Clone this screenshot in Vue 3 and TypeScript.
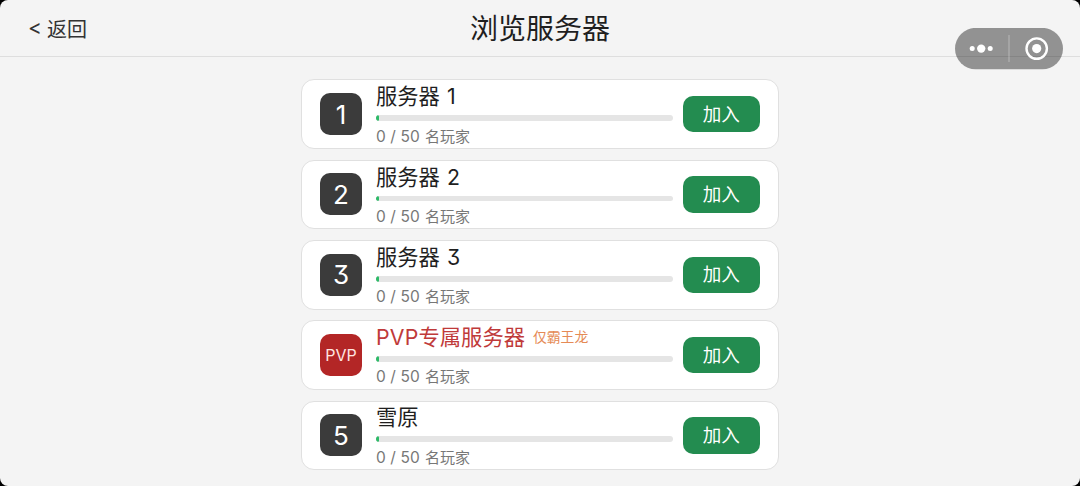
<script setup lang="ts">
interface Server {
  badge: string
  prefix?: string
  name: string
  suffix?: string
  pvp?: boolean
  note?: string
  players: number
  capacity: number
}

const servers: Server[] = [
  { badge: '1', name: '服务器', suffix: '1', players: 0, capacity: 50 },
  { badge: '2', name: '服务器', suffix: '2', players: 0, capacity: 50 },
  { badge: '3', name: '服务器', suffix: '3', players: 0, capacity: 50 },
  { badge: 'PVP', prefix: 'PVP', name: '专属服务器', pvp: true, note: '仅霸王龙', players: 0, capacity: 50 },
  { badge: '5', name: '雪原', players: 0, capacity: 50 },
]

// A sliver stays visible even when a server is empty
const fill = (s: Server): string => `${Math.max(1, (s.players / s.capacity) * 100)}%`
</script>

<template>
  <div class="screen">
    <header class="bar">
      <button class="back"><span class="chevron">&lt;</span>返回</button>
      <h1 class="title">浏览服务器</h1>
    </header>
    <main class="list">
      <section v-for="s in servers" :key="s.badge" class="card">
        <div class="badge" :class="{ pvp: s.pvp }">{{ s.badge }}</div>
        <div class="info">
          <div class="name" :class="{ pvp: s.pvp }">
            <span v-if="s.prefix" class="prefix">{{ s.prefix }}</span>
            <span>{{ s.name }}</span>
            <span v-if="s.suffix" class="suffix">{{ s.suffix }}</span>
            <span v-if="s.note" class="note">{{ s.note }}</span>
          </div>
          <div class="track"><div class="fill" :style="{ width: fill(s) }"></div></div>
          <div class="players"><span class="count">{{ s.players }} / {{ s.capacity }}</span>名玩家</div>
        </div>
        <button class="join">加入</button>
      </section>
    </main>
    <svg class="capsule" width="108" height="42" viewBox="0 0 108 42">
      <rect y="-0.1" width="108" height="41.4" rx="20.7" fill="#000" fill-opacity=".4" />
      <circle cx="17.2" cy="20.6" r="2.5" fill="#fff" />
      <circle cx="26.2" cy="20.6" r="4.2" fill="#fff" />
      <circle cx="35.2" cy="20.6" r="2.5" fill="#fff" />
      <path d="M54 7v27" stroke="#fff" stroke-opacity=".28" stroke-width="1.3" />
      <circle cx="81.7" cy="20.6" r="10.2" fill="none" stroke="#fff" stroke-width="2.4" />
      <circle cx="81.7" cy="20.6" r="4.6" fill="#fff" />
    </svg>
  </div>
</template>

<style>
body {
  margin: 0;
  background: #000;
}
</style>

<style scoped>
.screen {
  position: relative;
  box-sizing: border-box;
  width: 1080px;
  height: 486px;
  overflow: hidden;
  border-radius: 8px;
  background: #f4f4f4;
  color: #1f1f1f;
  font-family: Inter, "Noto Sans CJK SC", sans-serif;
  font-feature-settings: "cv09";
}
button {
  padding: 0;
  border: 0;
  font-family: inherit;
}
.bar {
  display: grid;
  grid-template-columns: 1fr auto 1fr;
  align-items: center;
  box-sizing: border-box;
  height: 57px;
  padding-top: 3px;
  border-bottom: 1px solid #dedede;
}
.back {
  display: flex;
  align-items: center;
  justify-self: start;
  margin-left: 28px;
  background: none;
  color: #333;
  font-size: 20px;
  line-height: 28px;
}
.chevron {
  width: 19px;
  margin-top: -3px;
  text-align: left;
  font-size: 21px;
}
.title {
  margin: 0 0 2px;
  font-size: 28px;
  font-weight: 400;
  line-height: 40px;
}
.list {
  display: flex;
  flex-direction: column;
  gap: 10.7px;
  width: 478px;
  margin: 22.4px auto 0;
}
.card {
  display: flex;
  align-items: center;
  box-sizing: border-box;
  height: 69.6px;
  padding: 0 18.5px 0 18px;
  border: 1px solid #e0e0e0;
  border-radius: 13px;
  background: #fff;
}
.badge {
  display: flex;
  align-items: center;
  justify-content: center;
  flex: none;
  width: 42px;
  height: 42px;
  border-radius: 10px;
  background: #3b3b3b;
  color: #fff;
  font-size: 26px;
}
.badge.pvp {
  background: #b32626;
  color: #ffe5e0;
  font-size: 16px;
}
.info {
  flex: 1;
  margin: 0 10.5px 0 14px;
  padding-top: 1.5px;
}
.name {
  display: flex;
  align-items: center;
  height: 27px;
  font-size: 21.3px;
  line-height: 27px;
  white-space: nowrap;
}
.name.pvp {
  color: #bf3a3a;
}
.prefix {
  letter-spacing: 0.2px;
}
.suffix {
  margin-left: 7px;
}
.note {
  margin-left: 8px;
  color: #e58a55;
  font-size: 13.8px;
}
.track {
  height: 5.8px;
  margin-top: 5px;
  overflow: hidden;
  border-radius: 3px;
  background: #e5e5e5;
}
.fill {
  height: 100%;
  border-radius: 3px;
  background: #2dba68;
}
.players {
  display: flex;
  margin-top: 5.5px;
  color: #777;
  font-size: 15px;
  line-height: 20px;
}
.count {
  width: 49px;
  font-size: 15.5px;
  letter-spacing: 0.1px;
}
.join {
  flex: none;
  width: 76.5px;
  height: 36.5px;
  padding-bottom: 4px;
  border-radius: 10px;
  background: #238c50;
  color: #fff;
  font-size: 18.6px;
}
.capsule {
  position: absolute;
  top: 28px;
  left: 955px;
}
</style>
